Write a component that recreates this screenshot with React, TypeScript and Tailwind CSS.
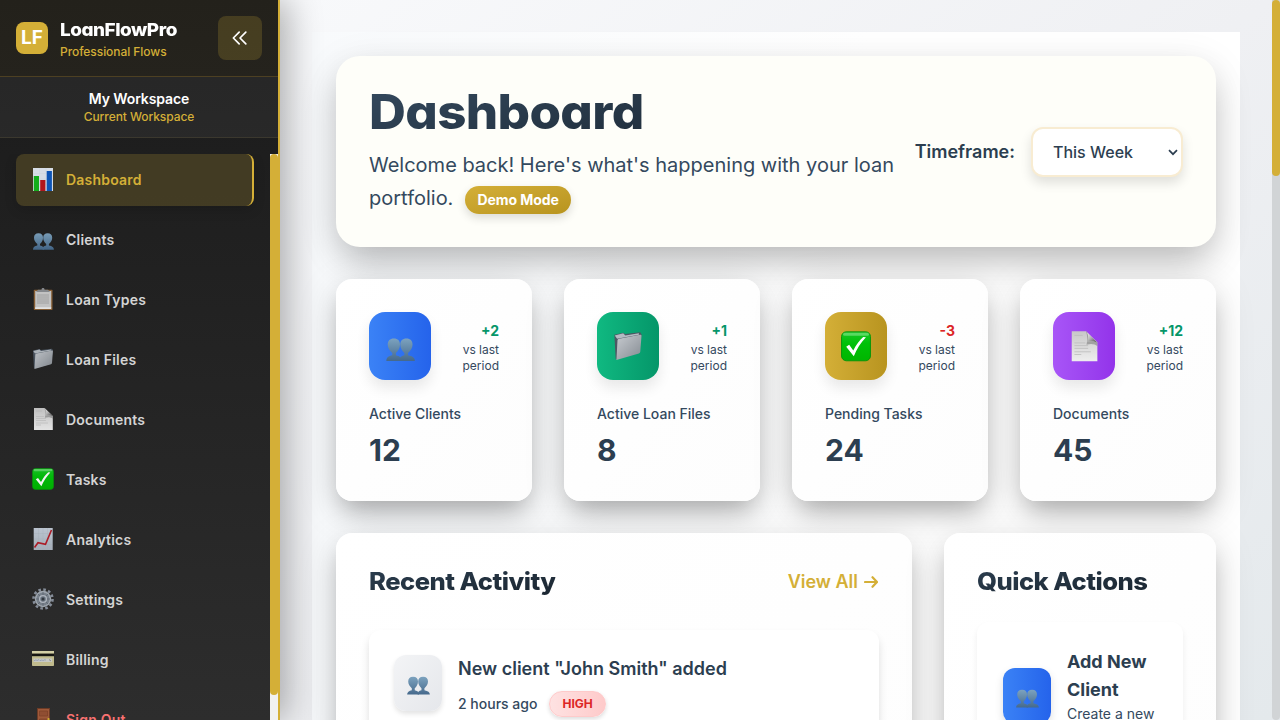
import type { ReactNode } from "react";

type EmojiName =
  | "chart" | "people" | "clipboard" | "folder" | "page" | "check"
  | "trend" | "gear" | "card" | "door";

const drawings: Record<EmojiName, ReactNode> = {
  chart: (
    <>
      <rect x="1" y="0" width="20" height="23" fill="#dfe6f1" />
      <path d="M1 5.5h20M1 11h20M1 16.500h20M7.500 0v23M14 0v23" stroke="#d2dbe9" strokeWidth=".4" />
      <rect x="1.800" y="8" width="5.200" height="15" fill="#12b51c" />
      <rect x="8.200" y="12" width="5.200" height="11" fill="#b8141b" />
      <rect x="14.700" y="3" width="5.200" height="20" fill="#0c57be" />
    </>
  ),
  people: (
    <g transform="translate(0 2.200)">
      <path d="M1 19.500c0-2.500 1.700-3.500 4.300-4.100v-1.700C3.500 12 2 10.300 2 7.500 2 4.600 3.600 3 6.500 3S11 4.600 11 7.500c0 2.800-1.300 4.600-3 6.200v1.700c3 .7 4 1.700 4 4.100z" fill="url(#bust)" />
      <path d="M10.600 19.500c0-2.500 1-3.500 3.600-4.100v-1.700c-1.700-1.700-3-3.400-3-6.200 0-2.900 1.600-4.500 4.500-4.500s4.500 1.600 4.500 4.500c0 2.800-1.500 4.500-3.300 6.200v1.700c3.300.7 5 1.700 5 4.100z" fill="url(#bust)" />
    </g>
  ),
  clipboard: (
    <>
      <rect x="1.800" y="1.800" width="18.700" height="20.200" rx=".8" fill="#8d6235" />
      <path d="M3.200 3h16v16.500L18 21H3.200z" fill="#cbcbcb" />
      <path d="M5 7h12M5 9h12M5 11h12M5 13h12M5 15h12" stroke="#a8a8a8" strokeWidth="1" />
      <path d="M3.200 19.300h16V21h-16z" fill="#ededed" />
      <path d="M6 1.700h3.500C9.500.5 10 0 11 0s1.600.5 1.600 1.700H16L18 4H4z" fill="#8b8e92" />
    </>
  ),
  folder: (
    <>
      <path d="M1 2.500 7.500 1l1.300 1L20 .700 21 2.500 18.500 16 2 20.500z" fill="#4d5763" />
      <path d="M1.300 3 7.500 1.500 9 3l10-1.500v1L3 5.500z" fill="#b4bbc2" />
      <path d="M3.300 6.600Q3.400 5.800 4.500 5.500L19.800 2.500q1.200-.2 1.100.8L20 15q-.1.900-1 1.200L2.500 21z" fill="url(#folderFace)" />
    </>
  ),
  page: (
    <>
      <path d="M2 0h10.500L20.800 8v14H2z" fill="url(#paper)" />
      <path d="M4 3h6M4 8.500h8M4 10.500h10M4 12.500h10M4 15h12M4 17h5" stroke="#bdbdbd" strokeWidth=".6" />
      <path d="M12.500 0c2 1.500 1.500 4.500 1.200 7.800 2.500-1 5.300-.6 7.100.5v2.500c-2-1.500-4.500-2-8-1 .8-3 .8-6.500-.3-9.800z" fill="#777" opacity=".55" />
      <path d="M12.500 0c2 1.500 1.500 4.500 1.200 7.800 2.500-1 5.300-.6 7.100.5z" fill="url(#curl)" />
    </>
  ),
  check: (
    <>
      <rect x=".4" y=".4" width="21.200" height="21.200" rx="3.500" fill="url(#green)" stroke="#07940b" strokeWidth=".7" />
      <rect x="1.500" y="1" width="19" height="2.200" rx="1.100" fill="#6bdd72" opacity=".8" />
      <path d="M3.800 11.300 6 9.900l3 4.200C11 10 13.500 6.700 16.300 4.200l2 .2C14.500 8.500 11.500 13 9.400 18.300z" fill="#fff" />
    </>
  ),
  trend: (
    <>
      <rect x="1.700" y="0" width="19" height="22" fill="url(#chartPaper)" />
      <path d="M2 5.500h18M2 11h18M2 16.500h18M6.500 0v22M11 0v22M15.500 0v22" stroke="#a9b3c0" strokeWidth=".3" />
      <path d="m2.500 19.500 3.500-4.800 7.500 1.700L19.500 2" fill="none" stroke="#b41d28" strokeWidth="1.600" />
    </>
  ),
  gear: (
    <>
      <circle cx="11" cy="11" r="9.500" fill="none" stroke="#8a929e" strokeWidth="2.600" strokeDasharray="2.600 2.374" />
      <circle cx="11" cy="11" r="7.400" fill="#7c8590" stroke="#a3abb4" strokeWidth="1.600" />
      <path d="M11 4v14M4 11h14M6 6l10 10M16 6 6 16" stroke="#5c6470" strokeWidth=".7" />
      <circle cx="11" cy="11" r="3.400" fill="#6b7683" stroke="#b6bdc6" strokeWidth="1.300" />
      <circle cx="11" cy="11" r="1.500" fill="#333941" />
    </>
  ),
  card: (
    <>
      <rect x="0" y="3" width="22" height="15" rx=".8" fill="#c9c393" />
      <rect x="0" y="3" width="22" height="2.500" fill="#ddd8ad" />
      <rect x="0" y="5.600" width="22" height="2.600" fill="#151512" />
      <rect x="1.500" y="10.500" width="18.500" height="3.500" fill="#d0d2cd" />
      <path d="m2 12.800 2-1 1 .8 2-1 1 1 2-.7 1 .7 2-1 1 .7" fill="none" stroke="#8592b4" strokeWidth=".6" />
      <path d="m17 11.500 2 1.500" stroke="#777" strokeWidth=".7" />
    </>
  ),
  door: (
    <>
      <rect x="5" y="0" width="13" height="22" fill="#713c25" />
      <rect x="6" y="1" width="11" height="21" fill="#a55c3b" />
      <path d="M7.500 3h8v5h-8zM7.500 11h8v7h-8z" fill="#965033" stroke="#7f4027" strokeWidth=".7" />
      <rect x="15.500" y="10" width="2" height="3" rx=".7" fill="#d7b42d" />
    </>
  ),
};

function Emoji({ name, className }: { name: EmojiName; className: string }) {
  return (
    <svg viewBox="0 0 22 23" className={className} aria-hidden="true">
      {drawings[name]}
    </svg>
  );
}

function Gradients() {
  return (
    <svg className="absolute size-0" aria-hidden="true">
      <defs>
        <linearGradient id="bust" x2="0" y2="1"><stop stopColor="#7da3bf" /><stop offset="1" stopColor="#45698c" /></linearGradient>
        <linearGradient id="folderFace" x2="1" y2="1"><stop stopColor="#c7cbd0" /><stop offset="1" stopColor="#858b92" /></linearGradient>
        <linearGradient id="paper" x2="0" y2="1"><stop stopColor="#c8c8c8" /><stop offset="1" stopColor="#eeeeee" /></linearGradient>
        <linearGradient id="curl" x2="1" y2="1"><stop stopColor="#ffffff" /><stop offset=".5" stopColor="#b5b5b5" /><stop offset="1" stopColor="#3c3c3c" /></linearGradient>
        <linearGradient id="green" x2="0" y2="1"><stop stopColor="#19c727" /><stop offset=".4" stopColor="#00c108" /><stop offset="1" stopColor="#00b600" /></linearGradient>
        <linearGradient id="chartPaper" x2="0" y2="1"><stop stopColor="#c3cdd9" /><stop offset="1" stopColor="#adb6c1" /></linearGradient>
      </defs>
    </svg>
  );
}

const navItems: { icon: EmojiName; label: string }[] = [
  { icon: "chart", label: "Dashboard" },
  { icon: "people", label: "Clients" },
  { icon: "clipboard", label: "Loan Types" },
  { icon: "folder", label: "Loan Files" },
  { icon: "page", label: "Documents" },
  { icon: "check", label: "Tasks" },
  { icon: "trend", label: "Analytics" },
  { icon: "gear", label: "Settings" },
  { icon: "card", label: "Billing" },
  { icon: "door", label: "Sign Out" },
];

function Sidebar() {
  return (
    <aside className="z-10 flex h-full w-[280px] shrink-0 flex-col border-r-2 border-[#d4af37] bg-linear-to-b from-[#1a1a1a] to-[#2d2d2d] shadow-[8px_0_32px_rgba(0,0,0,0.3)]">
      <header className="flex h-[77px] shrink-0 items-center border-b border-[#4d4022] bg-[#d4af37]/5 px-4">
        <div className="flex size-8 items-center justify-center rounded-lg bg-[#d4af37] text-[19px] font-bold text-white">LF</div>
        <div className="ml-3 flex-1">
          <div className="h-7 w-fit origin-left scale-x-[1.05] whitespace-nowrap text-[18px] leading-7 font-extrabold tracking-[-0.45px] text-white [font-feature-settings:'cv11']">LoanFlowPro</div>
          <div className="h-4 text-xs leading-4 font-medium tracking-[-0.06px] text-[#d4af37]">Professional Flows</div>
        </div>
        <button className="flex size-11 items-center justify-center rounded-lg bg-[#d4af37]/20 text-white">
          <svg viewBox="0 0 24 24" className="size-5" fill="none" stroke="currentColor" strokeWidth="2" strokeLinecap="round" strokeLinejoin="round">
            <path d="m11 19-7-7 7-7m8 14-7-7 7-7" />
          </svg>
        </button>
      </header>
      <div className="flex h-[61px] shrink-0 flex-col items-center border-b border-[#3b382e] bg-white/5 pt-3">
        <div className="text-sm leading-5 font-semibold tracking-[-0.1px] text-white">My Workspace</div>
        <div className="text-xs leading-4 font-medium tracking-[-0.07px] text-[#d4af37]">Current Workspace</div>
      </div>
      <div className="mt-4 flex min-h-0 flex-1 overflow-hidden">
        <nav className="flex w-[270px] flex-col gap-2 px-4">
          {navItems.map(({ icon, label }) => (
            <a
              key={label}
              className={
                label === "Dashboard"
                  ? "flex h-[52px] shrink-0 items-center gap-3 rounded-lg border-r-2 border-[#d4af37] bg-[#d4af37]/20 px-4 text-sm font-semibold tracking-[0.21px] text-[#d4af37] shadow-[0_4px_12px_rgba(0,0,0,0.15)]"
                  : label === "Sign Out"
                    ? "flex h-[52px] shrink-0 items-center gap-3 rounded-lg px-4 text-sm font-semibold tracking-[0.21px] text-[#f87171]"
                    : "flex h-[52px] shrink-0 items-center gap-3 rounded-lg px-4 text-sm font-semibold tracking-[0.21px] text-[#d4d4d4]"
              }
            >
              <Emoji name={icon} className="mb-px h-[23px] w-[22px] opacity-95" />
              {label}
            </a>
          ))}
        </nav>
        <div className="w-2 bg-[#f1f1f1]">
          <div className="h-[541px] rounded bg-[#d4af37]" />
        </div>
      </div>
    </aside>
  );
}

const stats: { icon: EmojiName; tile: string; delta: string; deltaColor: string; label: string; value: string }[] = [
  { icon: "people", tile: "from-[#3b82f6] to-[#2563eb]", delta: "+2", deltaColor: "text-[#059669]", label: "Active Clients", value: "12" },
  { icon: "folder", tile: "from-[#10b981] to-[#059669]", delta: "+1", deltaColor: "text-[#059669]", label: "Active Loan Files", value: "8" },
  { icon: "check", tile: "from-[#d4af37] to-[#b8941f]", delta: "-3", deltaColor: "text-[#dc2626]", label: "Pending Tasks", value: "24" },
  { icon: "page", tile: "from-[#a855f7] to-[#9333ea]", delta: "+12", deltaColor: "text-[#059669]", label: "Documents", value: "45" },
];

function StatCards() {
  return (
    <section className="mt-8 grid grid-cols-4 gap-8">
      {stats.map((s) => (
        <article key={s.label} className="h-[222px] rounded-2xl bg-linear-to-br from-white to-[#fdfdfd] p-[33px] shadow-[0_10px_40px_rgba(0,0,0,0.15),0_14px_24px_-6px_rgba(0,0,0,0.25)]">
          <div className="flex h-[68px] items-center justify-between">
            <div className={`flex h-[68px] w-[62px] items-center justify-center rounded-2xl bg-linear-to-r shadow-[0_8px_14px_rgba(0,0,0,0.09)] ${s.tile}`}>
              <Emoji name={s.icon} className="mt-[2px] h-[32px] w-[30px]" />
            </div>
            <div className="w-[50px] pt-1 text-right">
              <div className={`-mt-px h-[21px] text-sm leading-5 font-bold ${s.deltaColor}`}>{s.delta}</div>
              <div className="text-xs leading-4 text-[#34495e]">vs last period</div>
            </div>
          </div>
          <div className="mt-6 text-sm leading-5 font-medium text-[#34495e]">{s.label}</div>
          <div className="mt-2 text-[30px] leading-9 font-bold text-[#2c3e50]">{s.value}</div>
        </article>
      ))}
    </section>
  );
}

function PageHeader() {
  return (
    <section className="flex h-[191px] items-center rounded-3xl bg-[#fefef9] px-[33px] shadow-[0_10px_40px_rgba(0,0,0,0.1),0_18px_36px_-6px_rgba(0,0,0,0.22)]">
      <div className="w-[530px] self-start pt-[28px]">
        <h1 className="h-[65px] w-fit origin-left scale-x-[1.063] bg-linear-to-br from-[#34495e] to-[#1f2d3a] bg-clip-text text-[48px] leading-[56px] font-extrabold tracking-[-0.6px] text-transparent [font-feature-settings:'cv11']">Dashboard</h1>
        <p className="text-[20px] leading-[33px] whitespace-nowrap text-[#34495e]">
          Welcome back! Here's what's happening with your loan
          <br />
          portfolio.
          <span className="ml-3 inline-block h-7 rounded-full bg-linear-to-br from-[#d4af37] to-[#b8941f] px-3 align-middle text-sm leading-7 font-bold tracking-[-0.06px] text-white shadow-[0_4px_10px_rgba(0,0,0,0.14)]">Demo Mode</span>
        </p>
      </div>
      <div className="ml-auto flex items-center gap-4">
        <span className="text-[18px] leading-7 font-semibold text-[#2c3e50]">Timeframe:</span>
        <button className="mt-px flex h-[50px] w-[152px] items-center justify-between rounded-xl border-2 border-[#f8ecd2] bg-white pl-5 pr-[3px] text-base font-medium text-[#2c3e50] shadow-[0_6px_12px_rgba(0,0,0,0.12)]">
          This Week
          <svg viewBox="0 0 10 7" className="h-[7px] w-[10px]"><path d="m1 1.200 4 4 4-4" fill="none" stroke="#2c3e50" strokeWidth="1.700" /></svg>
        </button>
      </div>
    </section>
  );
}

function CardTitle({ children }: { children: ReactNode }) {
  return (
    <h2 className="w-fit origin-left scale-x-[1.066] bg-linear-to-br from-[#2c3e50] to-[#1a252f] bg-clip-text text-2xl leading-8 font-extrabold tracking-[-0.5px] whitespace-nowrap text-transparent [font-feature-settings:'cv11']">{children}</h2>
  );
}

function RecentActivity() {
  return (
    <article className="h-[480px] w-[576px] rounded-2xl bg-linear-to-br from-white to-[#fdfdfd] p-[33px] shadow-[0_10px_40px_rgba(0,0,0,0.15),0_14px_24px_-6px_rgba(0,0,0,0.25)]">
      <div className="flex h-8 items-center justify-between">
        <CardTitle>Recent Activity</CardTitle>
        <a className="mr-px flex items-center gap-[6px] text-[18px] leading-7 font-semibold text-[#d4af37]">
          View All
          <svg viewBox="0 0 14 12" className="h-3 w-[14px]" fill="none" stroke="currentColor" strokeWidth="2.200" strokeLinecap="round" strokeLinejoin="round">
            <path d="M1 6h12M8.500 1.200 13 6l-4.500 4.800" />
          </svg>
        </a>
      </div>
      <div className="mt-8 flex h-[108px] items-start rounded-xl bg-white p-[25px] shadow-[0_6px_8px_rgba(0,0,0,0.13)]">
        <div className="flex h-14 w-12 items-center justify-center rounded-xl bg-linear-to-br from-[#f3f4f6] to-[#e5e7eb] shadow-[0_3px_5px_rgba(0,0,0,0.11)]">
          <Emoji name="people" className="h-[25px] w-6" />
        </div>
        <div className="ml-4">
          <div className="h-7 text-[18px] leading-7 font-semibold text-[#2c3e50]">New client "John Smith" added</div>
          <div className="mt-2 flex h-[26px] items-center gap-3">
            <span className="text-sm font-medium text-[#34495e]">2 hours ago</span>
            <span className="flex h-[26px] items-center rounded-full border border-[#fecaca] bg-linear-to-r from-[#fee2e2] to-[#fecaca] px-3 text-xs font-bold text-[#dc2626] shadow-[0_2px_4px_rgba(0,0,0,0.14)]">HIGH</span>
          </div>
        </div>
      </div>
    </article>
  );
}

function QuickActions() {
  return (
    <article className="h-[480px] w-[272px] rounded-2xl bg-linear-to-br from-white to-[#fdfdfd] p-[33px] shadow-[0_10px_40px_rgba(0,0,0,0.15),0_14px_24px_-6px_rgba(0,0,0,0.25)]">
      <CardTitle>Quick Actions</CardTitle>
      <div className="mt-6 flex h-[148px] items-center rounded-xl bg-white px-[26px] shadow-[0_4px_6px_rgba(0,0,0,0.07)]">
        <div className="flex h-14 w-12 shrink-0 items-center justify-center rounded-xl bg-linear-to-r from-[#3b82f6] to-[#2563eb] shadow-[0_4px_8px_rgba(0,0,0,0.13)]">
          <Emoji name="people" className="h-[25px] w-6" />
        </div>
        <div className="ml-4">
          <div className="text-[18px] leading-7 font-bold text-[#2c3e50]">Add New Client</div>
          <div className="text-sm leading-5 text-[#34495e]">Create a new client profile</div>
        </div>
      </div>
    </article>
  );
}

export default function App() {
  return (
    <div className="relative flex h-screen w-screen overflow-hidden bg-[#e6eaee] font-['Inter','Liberation_Sans',sans-serif]">
      <Gradients />
      <Sidebar />
      <main className="min-w-0 flex-1 bg-linear-to-br from-[#f8f9fb] via-[#eff0f3] to-[#e4e9ec] pt-8 pl-8">
        <div className="h-[1000px] w-[928px] bg-linear-to-r from-[#f8fafc] to-white to-60% p-6">
          <PageHeader />
          <StatCards />
          <section className="mt-8 flex gap-8">
            <RecentActivity />
            <QuickActions />
          </section>
        </div>
      </main>
      <div className="w-2 shrink-0 rounded-b bg-[#d1d4d6]">
        <div className="h-44 rounded bg-[#d4af37]" />
      </div>
    </div>
  );
}
